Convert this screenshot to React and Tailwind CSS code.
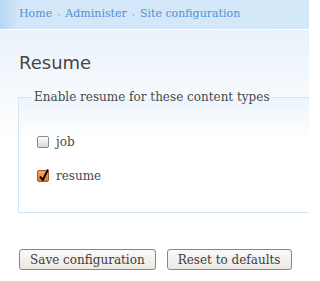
const Check = ({ checked }) =>
  checked ? (
    <span className="relative inline-block h-[12px] w-[12px] rounded-[2px] border border-[#9a5a2c] bg-gradient-to-b from-[#f7a66a] to-[#e8752a]">
      <svg className="absolute left-[0px] top-[-3px]" width="12" height="14" viewBox="0 0 12 14">
        <path d="M2 8.5 L4.8 12 L10 1.5" fill="none" stroke="#000" strokeWidth="2" strokeLinejoin="round" />
      </svg>
    </span>
  ) : (
    <span className="inline-block h-[12px] w-[12px] rounded-[2px] border border-[#8c8c8c] bg-gradient-to-b from-[#ffffff] to-[#d8d8d8]" />
  );

const Sep = () => <span className="mx-[5px] text-[8px] text-[#7aa6d2]">›</span>;

export default function App() {
  return (
    <div className="h-[281px] w-[309px] overflow-hidden bg-white font-['DejaVu_Serif',serif] text-[#494949]">
      <div className="flex h-[29px] items-center bg-[linear-gradient(90deg,#b7d7f3_0px,#d3e7f8_20px,#d3e8f8_100%)] pl-[19px] text-[11px] text-[#4f92d4]">
        <span>Home</span>
        <Sep />
        <span>Administer</span>
        <Sep />
        <span>Site configuration</span>
      </div>
      <div className="h-px bg-white" />
      <div className="bg-[linear-gradient(180deg,#e9f2fa_0px,#ffffff_110px)] pl-[18px] pt-[21px]">
        <h1 className="pl-[1px] font-['DejaVu_Sans',sans-serif] text-[18px] leading-[24px] text-[#474747]">Resume</h1>
        <fieldset className="mt-[15px] w-[330px] border border-[#d2e5f5] bg-[linear-gradient(180deg,#ecf4fb_0px,#ffffff_40px)] pb-[27px]">
          <legend className="ml-[13px] px-[2px] text-[12px] leading-[14px] text-[#494949]">Enable resume for these content types</legend>
          <div className="mt-[29px] flex items-center gap-[7px] pl-[18px] text-[12px]">
            <Check />
            <span>job</span>
          </div>
          <div className="mt-[16px] flex items-center gap-[7px] pl-[18px] text-[12px]">
            <Check checked />
            <span>resume</span>
          </div>
        </fieldset>
        <div className="mt-[36px] flex gap-[11px] pl-[1px]">
          <button className="h-[21px] rounded-[3px] border border-[#8d847b] bg-gradient-to-b from-[#fbfaf9] to-[#ebe8e4] px-[10px] text-[12px] text-[#3d3d3d]">Save configuration</button>
          <button className="h-[21px] rounded-[3px] border border-[#8d847b] bg-gradient-to-b from-[#fbfaf9] to-[#ebe8e4] px-[10px] text-[12px] text-[#3d3d3d]">Reset to defaults</button>
        </div>
      </div>
    </div>
  );
}
